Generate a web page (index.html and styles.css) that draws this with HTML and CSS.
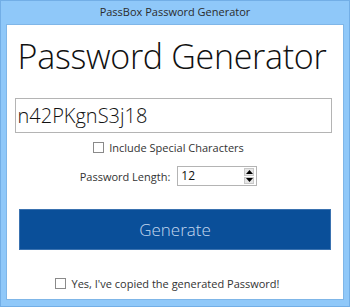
FILE: index.html
```html
<!DOCTYPE html>
<html lang="en">
<head>
    <meta charset="utf-8">
    <title>PassBox Password Generator</title>
    <link rel="stylesheet" href="styles.css">
</head>
<body>
    <div class="vindue">
        <div class="titel">PassBox Password Generator</div>
        <main class="indhold">
            <h1>Password Generator</h1>
            <input class="kode" type="text" value="n42PKgnS3j18">
            <label class="valg">
                <span class="boks"></span>
                Include Special Characters
            </label>
            <div class="laengde">
                <span>Password Length:</span>
                <div class="tal">
                    <span class="tal_vaerdi">12</span>
                    <div class="pile">
                        <span class="pil"><svg width="7" height="4" viewBox="0 0 7 4"><path d="M3.5 0 7 4H0z" fill="#000"/></svg></span>
                        <span class="pil"><svg width="7" height="4" viewBox="0 0 7 4"><path d="M0 0h7L3.5 4z" fill="#000"/></svg></span>
                    </div>
                </div>
            </div>
            <button class="generer">Generate</button>
            <label class="valg kopieret">
                <span class="boks"></span>
                Yes, I've copied the generated Password!
            </label>
        </main>
    </div>
</body>
</html>
```

FILE: styles.css
```css
* {
    box-sizing: border-box;
}

body {
    margin: 0;
    font-family: 'Open Sans', 'Noto Sans', sans-serif;
}

.vindue {
    width: 350px;
    height: 307px;
    background: #8fc8f9;
    border: 1px solid #72aee6;
    display: flex;
    flex-direction: column;
}

.titel {
    height: 23px;
    line-height: 22px;
    text-align: center;
    font-size: 11px;
    color: #2b2b2b;
}

.indhold {
    flex: 1;
    margin: 0 5px 6px 5px;
    background: #fff;
    border: 1px solid #7fb6e8;
    display: flex;
    flex-direction: column;
    align-items: center;
}

h1 {
    margin: 8px 0 0 -6px;
    font-weight: 300;
    font-size: 34px;
    line-height: 46px;
    color: #111;
    letter-spacing: -0.3px;
}

.kode {
    margin-top: 19px;
    width: 317px;
    height: 35px;
    margin-left: -4px;
    border: 1px solid #b4b4b4;
    padding: 0 2px;
    font-family: inherit;
    font-weight: 300;
    font-size: 20px;
    color: #111;
    outline: none;
}

.valg {
    display: flex;
    align-items: center;
    gap: 5px;
    font-size: 11px;
    color: #333;
    margin-top: 6px;
    margin-left: -13px;
    height: 16px;
}

.boks {
    width: 11px;
    height: 11px;
    border: 1px solid #8a8a8a;
    background: #fff;
}

.laengde {
    display: flex;
    align-items: center;
    gap: 7px;
    margin-top: 11px;
    margin-left: -13px;
    font-size: 11px;
    color: #333;
}

.tal {
    width: 80px;
    height: 20px;
    border: 1px solid #b4b4b4;
    display: flex;
    justify-content: space-between;
    padding: 1px 2px 1px 3px;
}

.tal_vaerdi {
    font-size: 12px;
    line-height: 16px;
    color: #111;
}

.pile {
    display: flex;
    flex-direction: column;
    gap: 1px;
}

.pil {
    width: 10px;
    height: 8px;
    background: #e6e6e6;
    border: 1px solid #c8c8c8;
    display: flex;
    align-items: center;
    justify-content: center;
}

.generer {
    margin-top: 23px;
    width: 312px;
    height: 41px;
    background: #0a4f99;
    border: 1px solid #3a72b0;
    color: #c5d8ef;
    font-family: inherit;
    font-weight: 300;
    font-size: 17px;
}

.kopieret {
    margin-top: 25px;
    margin-left: -16px;
    gap: 6px;
}
```
